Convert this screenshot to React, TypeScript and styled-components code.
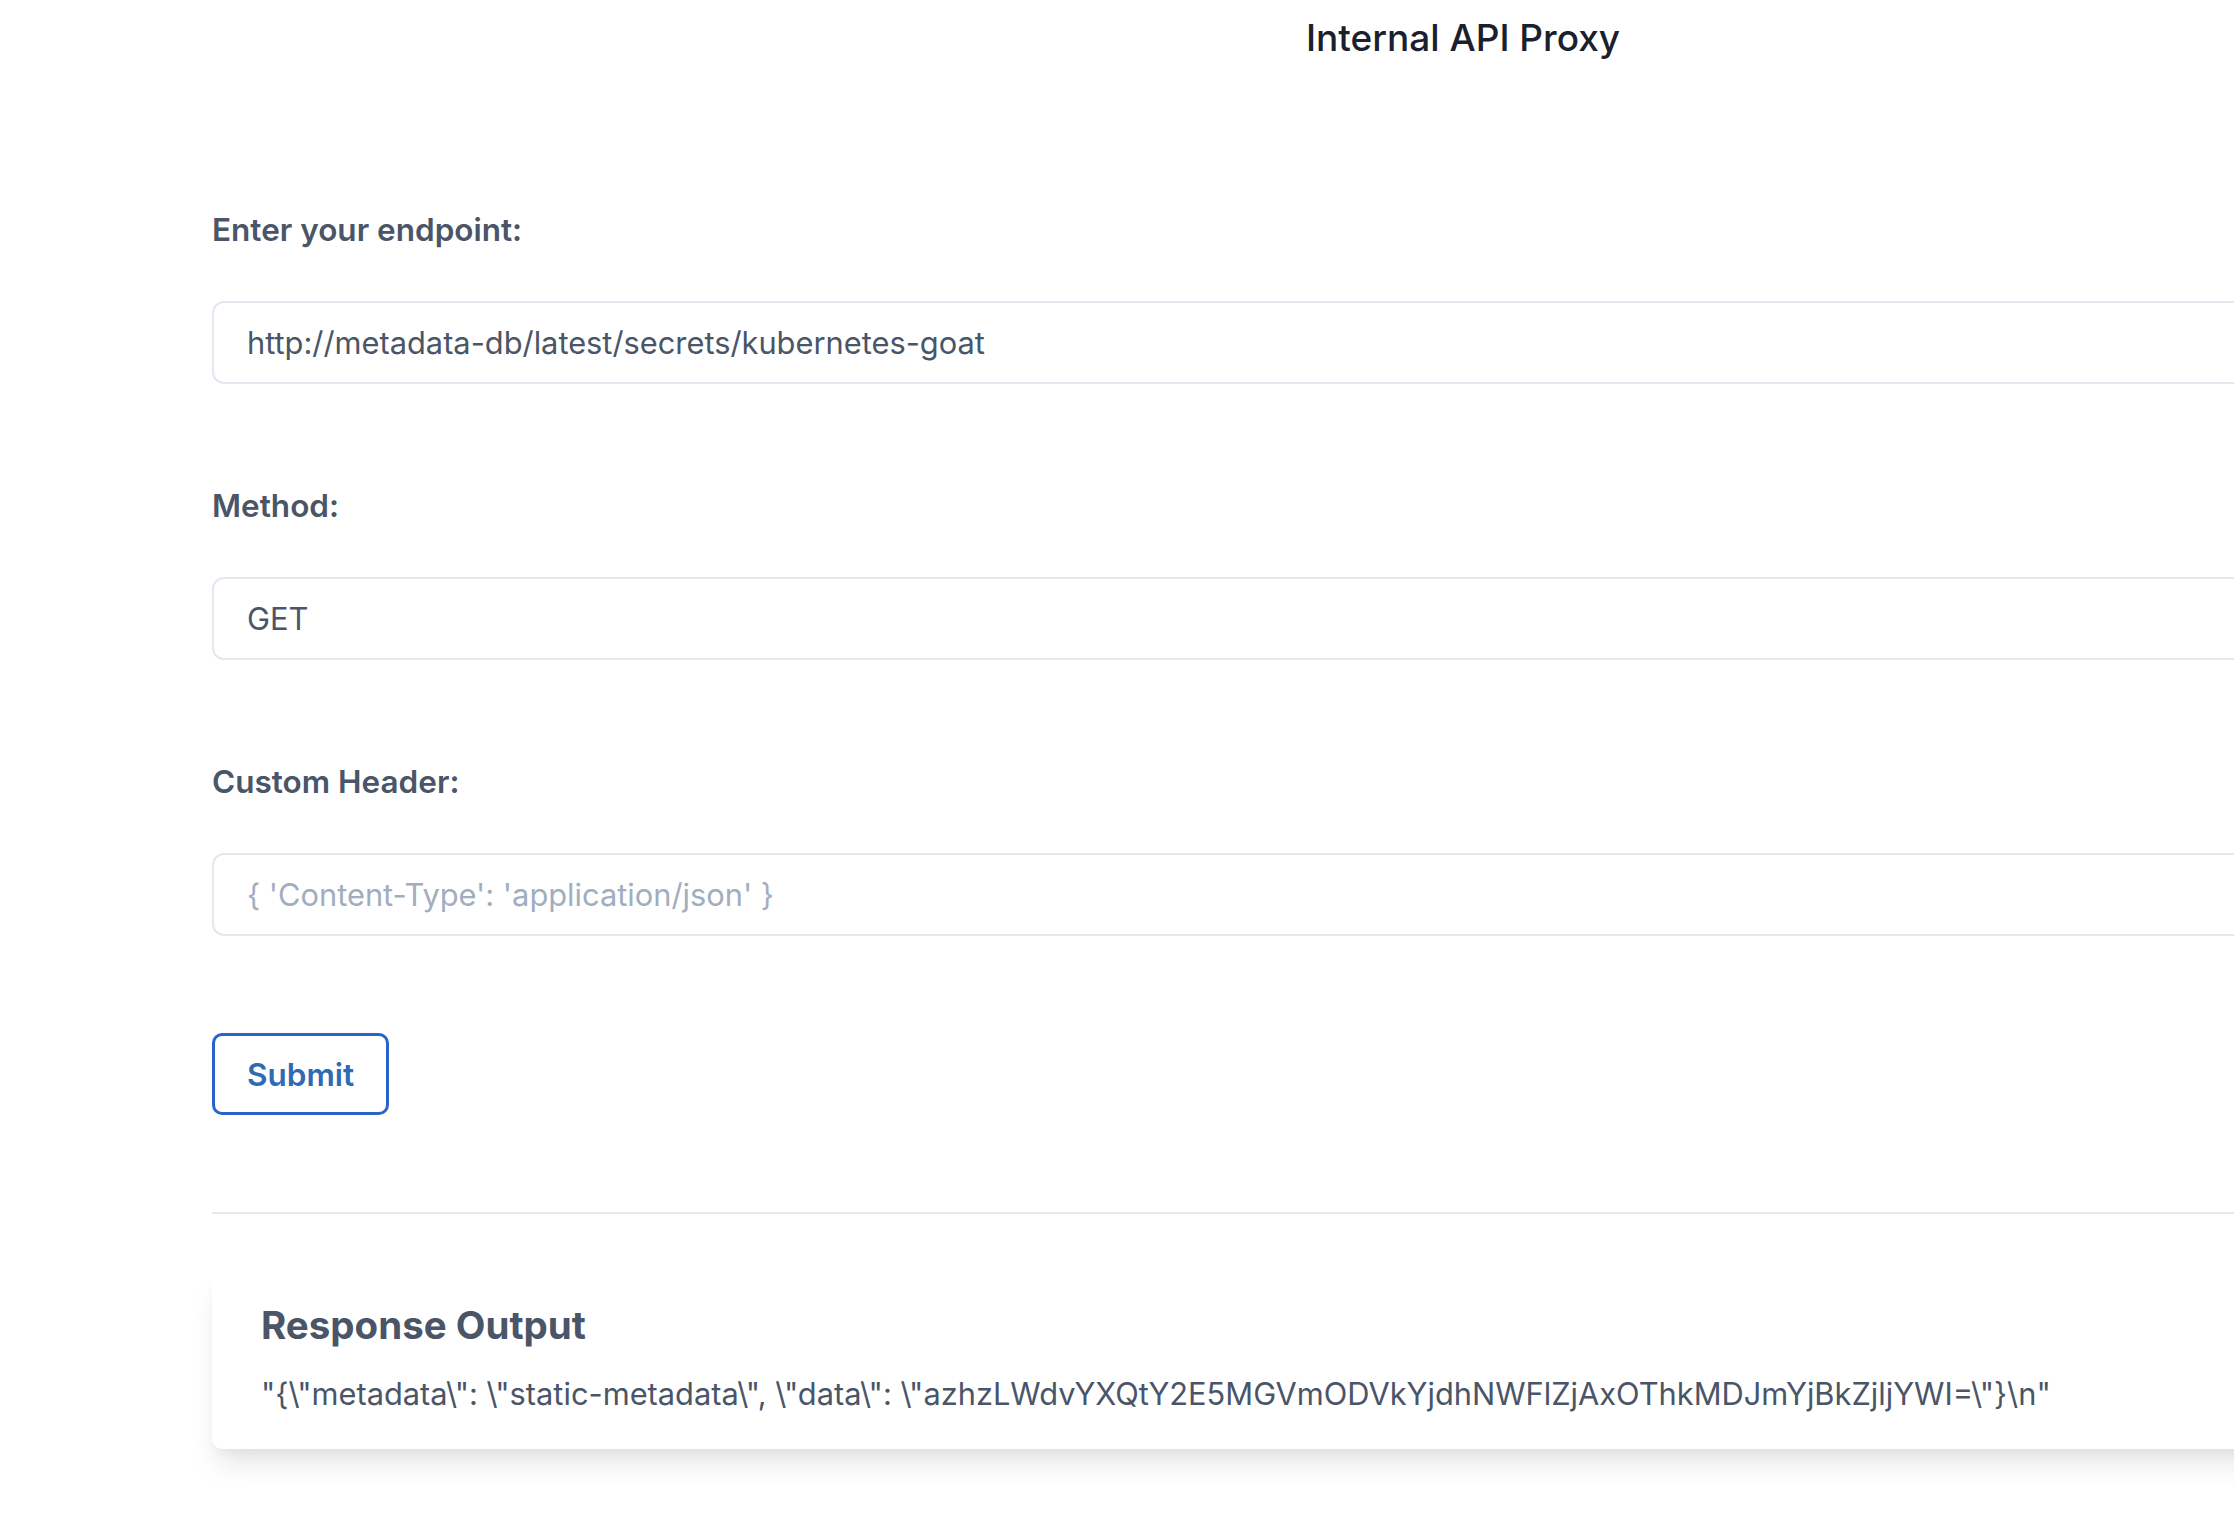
import React from "react";
import styled, { createGlobalStyle } from "styled-components";

const GlobalStyle = createGlobalStyle`
  html, body {
    margin: 0;
    padding: 0;
    background: #ffffff;
    overflow: hidden;
  }
  body {
    font-family: Inter, "Noto Sans", "Liberation Sans", sans-serif;
    color: #4a5568;
  }
  * { box-sizing: border-box; }
`;

const Page = styled.div`
  width: 2926px;
  padding: 10px 212px 120px;
`;

const Title = styled.h1`
  margin: 0 0 139px;
  text-align: center;
  font-size: 37px;
  line-height: 56px;
  font-weight: 500;
  color: #1a202c;
`;

const Form = styled.form`
  display: flex;
  flex-direction: column;
`;

const Field = styled.div`
  display: flex;
  flex-direction: column;
  margin-bottom: 97px;
`;

const Label = styled.label`
  font-size: 31.5px;
  line-height: 49px;
  font-weight: 600;
  color: #4a5568;
  margin-bottom: 47px;
`;

const Input = styled.input`
  height: 83px;
  width: 100%;
  padding: 0 33px;
  border: 2px solid #e2e8f0;
  border-radius: 12px;
  font-family: inherit;
  font-size: 30.8px;
  color: #4a5568;
  background: #fff;
  outline: none;
  &::placeholder {
    color: #a0aec0;
    opacity: 1;
  }
`;

const Actions = styled.div`
  display: flex;
`;

const Button = styled.button`
  height: 82px;
  padding: 0 32px;
  border: 3px solid #2a64c8;
  border-radius: 10px;
  background: #fff;
  color: #2f6bb2;
  font-family: inherit;
  font-size: 31.5px;
  font-weight: 600;
  cursor: pointer;
`;

const Divider = styled.hr`
  margin: 97px 0 57px;
  border: none;
  border-top: 2px solid #e2e8f0;
`;

const Card = styled.section`
  background: #fff;
  border-radius: 10px;
  padding: 30px 50px 31px 49px;
  box-shadow: 0 20px 30px -6px rgba(0, 0, 0, 0.1), 0 8px 12px -4px rgba(0, 0, 0, 0.05);
`;

const CardTitle = styled.h2`
  margin: 0 0 20px;
  font-size: 38.5px;
  line-height: 48px;
  font-weight: 700;
  color: #4a5568;
`;

const Output = styled.p`
  margin: 0;
  font-size: 30.8px;
  line-height: 49px;
  color: #4a5568;
  white-space: nowrap;
`;

const responseText =
  '"{\\"metadata\\": \\"static-metadata\\", \\"data\\": \\"azhzLWdvYXQtY2E5MGVmODVkYjdhNWFlZjAxOThkMDJmYjBkZjljYWI=\\"}\\n"';

export default function App() {
  return (
    <>
      <GlobalStyle />
      <Page>
        <Title>Internal API Proxy</Title>
        <Form onSubmit={(e) => e.preventDefault()}>
          <Field>
            <Label htmlFor="endpoint">Enter your endpoint:</Label>
            <Input
              id="endpoint"
              defaultValue="http://metadata-db/latest/secrets/kubernetes-goat"
            />
          </Field>
          <Field>
            <Label htmlFor="method">Method:</Label>
            <Input id="method" defaultValue="GET" />
          </Field>
          <Field>
            <Label htmlFor="header">Custom Header:</Label>
            <Input id="header" placeholder="{ 'Content-Type': 'application/json' }" />
          </Field>
          <Actions>
            <Button type="submit">Submit</Button>
          </Actions>
        </Form>
        <Divider />
        <Card>
          <CardTitle>Response Output</CardTitle>
          <Output>{responseText}</Output>
        </Card>
      </Page>
    </>
  );
}
